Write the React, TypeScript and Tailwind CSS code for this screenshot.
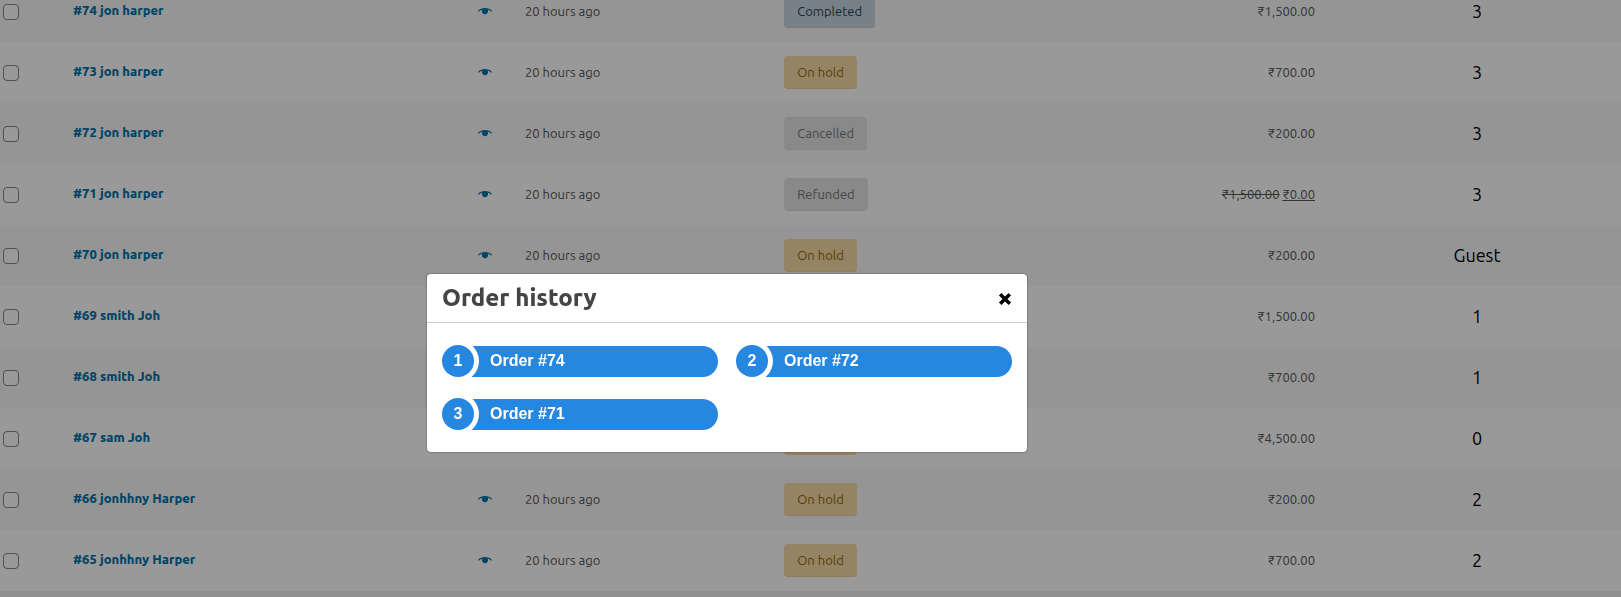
import { useState } from 'react'

type Status = 'completed' | 'on-hold' | 'cancelled' | 'refunded'

interface Order {
  id: number
  name: string
  status: Status
  total: string
  refundedTotal?: string
  customer: string
}

const orders: Order[] = [
  { id: 74, name: 'jon harper', status: 'completed', total: '₹1,500.00', customer: '3' },
  { id: 73, name: 'jon harper', status: 'on-hold', total: '₹700.00', customer: '3' },
  { id: 72, name: 'jon harper', status: 'cancelled', total: '₹200.00', customer: '3' },
  { id: 71, name: 'jon harper', status: 'refunded', total: '₹1,500.00', refundedTotal: '₹0.00', customer: '3' },
  { id: 70, name: 'jon harper', status: 'on-hold', total: '₹200.00', customer: 'Guest' },
  { id: 69, name: 'smith Joh', status: 'on-hold', total: '₹1,500.00', customer: '1' },
  { id: 68, name: 'smith Joh', status: 'on-hold', total: '₹700.00', customer: '1' },
  { id: 67, name: 'sam Joh', status: 'on-hold', total: '₹4,500.00', customer: '0' },
  { id: 66, name: 'jonhhny Harper', status: 'on-hold', total: '₹200.00', customer: '2' },
  { id: 65, name: 'jonhhny Harper', status: 'on-hold', total: '₹700.00', customer: '2' },
]

const history = [74, 72, 71]

const statusLabels: Record<Status, string> = {
  completed: 'Completed',
  'on-hold': 'On hold',
  cancelled: 'Cancelled',
  refunded: 'Refunded',
}

const statusStyles: Record<Status, string> = {
  completed: 'bg-[#c8d7e1] text-[#2e4453]',
  'on-hold': 'bg-[#f8dda7] text-[#94660c]',
  cancelled: 'bg-[#e5e5e5] text-[#777]',
  refunded: 'bg-[#e5e5e5] text-[#777]',
}

function EyeIcon() {
  return (
    <svg width="14" height="8" viewBox="0 0 14 8" fill="currentColor" aria-hidden="true">
      <path d="M0 2.900C1.800.8 4.200 0 7 0s5.200.8 7 2.900l-.7.8C12.300 2.600 11.200 1.800 9.800 1.400c.2.400.3.900.3 1.400 0 2-1.300 3.400-3.100 3.400S3.900 4.800 3.900 2.800c0-.5.100-1 .3-1.400C2.800 1.800 1.700 2.600.7 3.700z" />
    </svg>
  )
}

function CloseIcon() {
  return (
    <svg width="14" height="14" viewBox="0 0 14 14" stroke="currentColor" strokeWidth="3.500" aria-hidden="true">
      <path d="M2.200 2.200l9.600 9.600M11.800 2.200l-9.600 9.600" />
    </svg>
  )
}

function OrderRow({ order }: { order: Order }) {
  return (
    <tr className="h-[61px] odd:bg-[#f9f9f9] even:bg-white">
      <td className="pl-[3px]">
        <input
          type="checkbox"
          aria-label={`Select order ${order.id}`}
          className="block size-4 appearance-none rounded border border-[#7e8993] bg-white checked:bg-[#0073aa]"
        />
      </td>
      <td className="pl-3 pr-[23px]">
        <div className="flex items-center justify-between text-[#0073aa]">
          <a href="#order" className="pb-px font-extrabold">
            #{order.id} {order.name}
          </a>
          <a href="#preview" aria-label={`Preview order ${order.id}`}>
            <EyeIcon />
          </a>
        </div>
      </td>
      <td className="pl-2.5">20 hours ago</td>
      <td className="pl-2.5">
        <span
          className={`inline-flex h-[33px] items-center rounded border-b border-black/5 px-[13px] pt-px align-middle ${statusStyles[order.status]}`}
        >
          {statusLabels[order.status]}
        </span>
      </td>
      <td className="pr-[18px] text-right">
        {order.refundedTotal ? (
          <>
            <del>{order.total}</del> <ins>{order.refundedTotal}</ins>
          </>
        ) : (
          order.total
        )}
      </td>
      <td className="pb-0.5 text-center text-lg text-black">{order.customer}</td>
    </tr>
  )
}

function OrderHistory({ onClose }: { onClose: () => void }) {
  return (
    <div className="fixed inset-0 flex items-start justify-center bg-black/40 pr-[167px] pt-[274px]">
      <div
        role="dialog"
        aria-labelledby="history-title"
        className="w-[600px] rounded bg-[#fefefe] shadow-[0_0_2px_rgba(0,0,0,0.6)]"
      >
        {/* Header */}
        <div className="flex h-[49px] items-center justify-between border-b border-[#ccc] px-[15px]">
          <h2 id="history-title" className="text-2xl font-extrabold text-[#444]">
            Order history
          </h2>
          <button type="button" aria-label="Close" onClick={onClose} className="pt-0.5 text-black">
            <CloseIcon />
          </button>
        </div>

        {/* Orders */}
        <ol className="grid grid-cols-2 gap-x-[18px] gap-y-[21px] px-[15px] py-[22px] font-['Liberation_Sans',Arial,sans-serif] text-base font-bold text-white">
          {history.map((id, index) => (
            <li key={id} className="flex h-8 items-end">
              <span className="z-10 flex size-8 shrink-0 items-center justify-center rounded-full bg-[#2587e0] shadow-[0_0_0_5px_#fefefe]">
                {index + 1}
              </span>
              <a
                href="#order"
                className="-ml-4 flex h-[31px] flex-1 items-center rounded-r-2xl bg-[#2587e0] pb-0.5 pl-8"
              >
                Order #{id}
              </a>
            </li>
          ))}
        </ol>
      </div>
    </div>
  )
}

export default function App() {
  const [isOpen, setIsOpen] = useState(true)

  return (
    <main className="h-screen overflow-hidden bg-[#f1f1f1] font-[Ubuntu,'Noto_Sans',sans-serif] text-[13px] text-[#555]">
      <table className="-mt-[19px] w-full table-fixed">
        <colgroup>
          <col className="w-[61px]" />
          <col className="w-[28%]" />
          <col className="w-[16%]" />
          <col className="w-[16%]" />
          <col />
          <col className="w-72" />
        </colgroup>
        <tbody>
          {orders.map((order) => (
            <OrderRow key={order.id} order={order} />
          ))}
        </tbody>
      </table>

      {isOpen && <OrderHistory onClose={() => setIsOpen(false)} />}
    </main>
  )
}
